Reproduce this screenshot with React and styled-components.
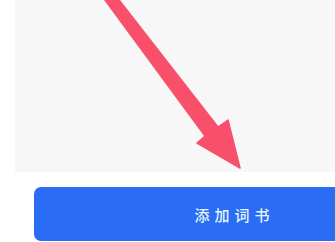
import React from "react";
import styled, { createGlobalStyle } from "styled-components";

const Global = createGlobalStyle`
  html, body { margin: 0; padding: 0; background: #ffffff; overflow: hidden; }
  body { width: 335px; height: 242px; font-family: "Noto Sans CJK SC", "Noto Sans", sans-serif; }
`;

const Page = styled.div`
  display: flex;
  flex-direction: column;
  width: 335px;
  height: 242px;
  overflow: hidden;
`;

const Panel = styled.div`
  margin-left: 15px;
  width: 320px;
  height: 172px;
  background: #f7f7f7;
  flex-shrink: 0;
`;

const ArrowSvg = styled.svg`
  display: block;
  width: 320px;
  height: 172px;
`;

const Button = styled.button`
  margin: 15px 0 0 34px;
  width: 396px;
  height: 54px;
  flex-shrink: 0;
  border: none;
  border-radius: 7px;
  background: #2a6cf3;
  color: #e4f6ff;
  font-family: "Noto Sans CJK SC", "Noto Sans", sans-serif;
  font-size: 15px;
  font-weight: 500;
  letter-spacing: 5px;
  padding: 0 0 0 5px;
  display: flex;
  align-items: center;
  justify-content: center;
`;

export default function App() {
  return (
    <>
      <Global />
      <Page>
        <Panel>
          <ArrowSvg viewBox="15 0 320 172">
            <polygon
              points="102,-4 205,136 197,143 240,168 228,120 218,127 116,-4"
              fill="#f8506b"
              stroke="#f8506b"
              strokeWidth="1.5"
              strokeLinejoin="round"
            />
          </ArrowSvg>
        </Panel>
        <Button>添加词书</Button>
      </Page>
    </>
  );
}
